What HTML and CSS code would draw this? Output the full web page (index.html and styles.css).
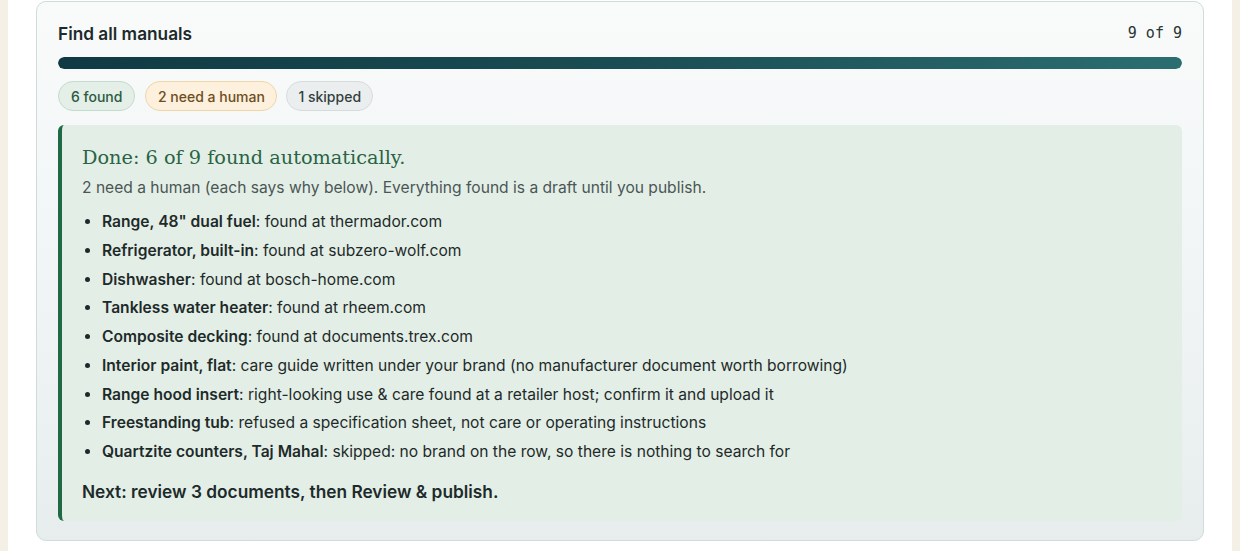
FILE: index.html
```html
<!DOCTYPE html>
<html>
<head>
<meta charset="utf-8">
<link rel="stylesheet" href="styles.css">
</head>
<body>
<main class="page">
  <section class="card">
    <header class="card-head">
      <h2 class="title">Find all manuals</h2>
      <span class="count">9 of 9</span>
    </header>
    <div class="bar"><div class="bar-fill"></div></div>
    <div class="chips">
      <span class="chip chip-found">6 found</span>
      <span class="chip chip-human">2 need a human</span>
      <span class="chip chip-skip">1 skipped</span>
    </div>
    <div class="result">
      <h3 class="result-title">Done: 6 of 9 found automatically.</h3>
      <p class="result-sub">2 need a human (each says why below). Everything found is a draft until you publish.</p>
      <ul class="items">
        <li><b>Range, 48" dual fuel</b>: found at thermador.com</li>
        <li><b>Refrigerator, built-in</b>: found at subzero-wolf.com</li>
        <li><b>Dishwasher</b>: found at bosch-home.com</li>
        <li><b>Tankless water heater</b>: found at rheem.com</li>
        <li><b>Composite decking</b>: found at documents.trex.com</li>
        <li><b>Interior paint, flat</b>: care guide written under your brand (no manufacturer document worth borrowing)</li>
        <li><b>Range hood insert</b>: right-looking use &amp; care found at a retailer host; confirm it and upload it</li>
        <li><b>Freestanding tub</b>: refused a specification sheet, not care or operating instructions</li>
        <li><b>Quartzite counters, Taj Mahal</b>: skipped: no brand on the row, so there is nothing to search for</li>
      </ul>
      <p class="next">Next: review 3 documents, then Review &amp; publish.</p>
    </div>
  </section>
</main>
</body>
</html>
```

FILE: styles.css
```css
html { background: #f4f0e6; }
body {
  margin: 0 8px;
  background: #ffffff;
  min-height: 551px;
  font-family: Inter, "Noto Sans", sans-serif;
  color: #1e2a2a;
}
.page {
  padding: 1px 28px 10px;
}
.card {
  border: 1px solid #cfdcdb;
  border-radius: 10px;
  background: linear-gradient(180deg, #f9fbfb 0%, #f3f6f6 40%, #e7eded 100%);
  padding: 20px 21px 19px;
}
.card-head {
  display: flex;
  justify-content: space-between;
  align-items: center;
  height: 22px;
}
.title {
  margin: 0;
  font-size: 17.25px;
  font-weight: 600;
  color: #1d2a2b;
}
.count {
  font-family: "DejaVu Sans Mono", "Liberation Mono", monospace;
  font-size: 15px;
  color: #2a3535;
}
.bar {
  margin-top: 13px;
  height: 12px;
  border-radius: 6px;
  background: #dfe7e7;
  overflow: hidden;
}
.bar-fill {
  height: 100%;
  width: 100%;
  border-radius: 6px;
  background: linear-gradient(90deg, #103a43 0%, #1a4d53 50%, #2b6e71 100%);
}
.chips {
  display: flex;
  gap: 10px;
  margin-top: 12px;
}
.chip {
  display: inline-flex;
  align-items: center;
  height: 30px;
  box-sizing: border-box;
  padding: 0 12px;
  border-radius: 15px;
  border: 1px solid;
  font-size: 14px;
  font-weight: 500;
}
.chip-found { background: #e3efe7; border-color: #c4dbcd; color: #2c5a40; }
.chip-human { background: #fdf0dc; border-color: #eed6a6; color: #6e4d22; padding: 0 11.5px; }
.chip-skip { background: #ebeeee; border-color: #d6dcdc; color: #334040; padding: 0 11px; margin-left: -1px; }
.result {
  margin-top: 14px;
  background: #e3efe6;
  border-left: 4px solid #1f6a44;
  border-radius: 6px;
  padding: 20px 20px 16px;
}
.result-title {
  margin: 0;
  font-family: "DejaVu Serif", "Liberation Serif", serif;
  font-weight: 400;
  font-size: 19.3px;
  line-height: 26px;
  color: #2a6345;
}
.result-sub {
  margin: 6px 0 0;
  font-size: 15.6px;
  line-height: 22px;
  color: #4b5656;
}
.items {
  margin: 9px 0 0;
  padding-left: 20px;
  font-size: 15.6px;
  line-height: 28.75px;
  color: #1e2a2a;
}
.items b { font-weight: 600; }
.next {
  margin: 12px 0 0;
  font-size: 17.3px;
  font-weight: 600;
  line-height: 26px;
  color: #1d2a2b;
}
```
